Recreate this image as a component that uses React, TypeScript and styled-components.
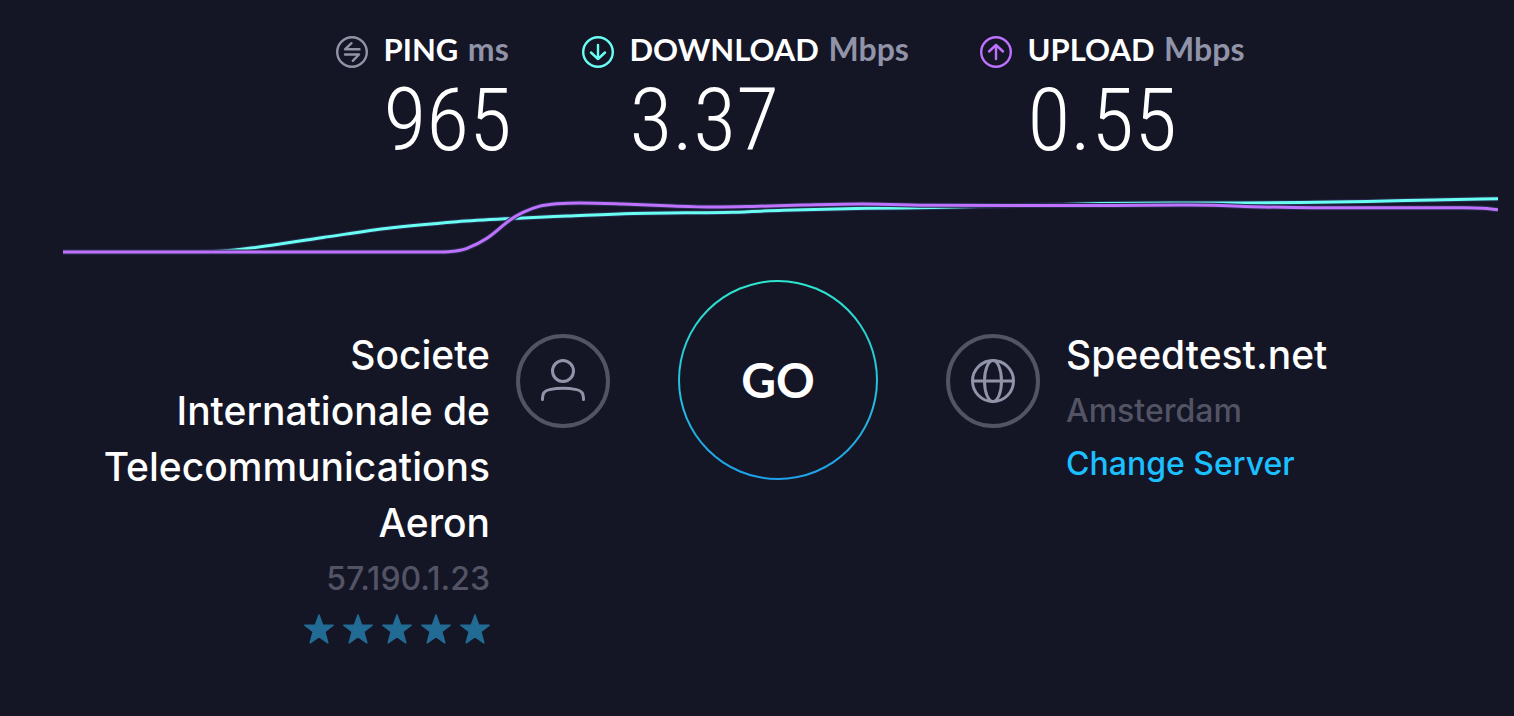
import React from "react";
import styled, { createGlobalStyle } from "styled-components";

const colors = {
  bg: "#141625",
  text: "#ffffff",
  muted: "#9193a8",
  dim: "#525466",
  cyan: "#6afff3",
  purple: "#bf71ff",
  link: "#1cbfff",
  star: "#226b95",
  halo: "#262c4e",
};

const GlobalStyle = createGlobalStyle`
  *, *::before, *::after { box-sizing: border-box; }
  body {
    margin: 0;
    background: ${colors.bg};
    color: ${colors.text};
    font-family: Inter, "Liberation Sans", sans-serif;
  }
`;

const Page = styled.main`
  padding: 32px 0 64px 42px;
`;

const Metrics = styled.section`
  display: flex;
  justify-content: center;
  gap: 72px;
  padding-left: 25px;
`;

const MetricBox = styled.div<{ $width: number }>`
  display: grid;
  grid-template-columns: 32px auto;
  column-gap: 16px;
  width: ${(p) => p.$width}px;
  white-space: nowrap;

  svg {
    margin-top: 4px;
  }
`;

const MetricTitle = styled.h2`
  margin: 0;
  font: 700 31px/34px Lato, "Liberation Sans", sans-serif;
`;

const Unit = styled.span`
  margin-left: 2px;
  color: ${colors.muted};
  font-size: 32px;
`;

const MetricValue = styled.div`
  grid-column: 2;
  font: 300 88px/104px "Roboto Condensed", Roboto, sans-serif;
`;

const ChartArea = styled.div`
  margin: 18px 16px 0 21px;

  svg {
    display: block;
    width: 100%;
    height: 70px;
  }
`;

const Connection = styled.section`
  display: grid;
  grid-template-columns: minmax(0, 1fr) 200px minmax(0, 1fr);
  column-gap: 68px;
  margin-top: 20px;
`;

const Side = styled.div<{ $end?: boolean }>`
  display: flex;
  flex-direction: ${(p) => (p.$end ? "row-reverse" : "row")};
  gap: 26px;
  padding-top: 47px;
  text-align: ${(p) => (p.$end ? "right" : "left")};
`;

const Badge = styled.div`
  display: flex;
  flex: none;
  align-items: center;
  justify-content: center;
  width: 94px;
  height: 94px;
  margin-top: 7px;
  border: 4px solid ${colors.dim};
  border-radius: 50%;
`;

const Details = styled.div`
  max-width: 388px;
`;

const Name = styled.h3`
  margin: 0;
  font-size: 39px;
  font-weight: 500;
  line-height: 56px;
`;

const Sub = styled.p`
  margin: 0;
  color: ${colors.dim};
  font-size: 32px;
  font-weight: 500;
  line-height: 56px;
`;

const ServerLink = styled.a`
  display: block;
  color: ${colors.link};
  font-size: 32px;
  font-weight: 500;
  line-height: 50px;
  text-decoration: none;
`;

const Stars = styled.div`
  display: flex;
  justify-content: flex-end;
  gap: 9px;
  margin-top: 7px;
`;

const GoButton = styled.button`
  width: 200px;
  height: 200px;
  padding: 0;
  border: 2px solid transparent;
  border-radius: 50%;
  background:
    linear-gradient(${colors.bg}, ${colors.bg}) padding-box,
    linear-gradient(#2ee6cf, #1f9fe8) border-box;
  color: ${colors.text};
  font: 700 48px/56px Lato, "Liberation Sans", sans-serif;
  cursor: pointer;
`;

type MetricKind = "ping" | "download" | "upload";

const metricGlyphs: Record<MetricKind, { color: string; path: string }> = {
  ping: { color: colors.muted, path: "M23.500 13.300H9L15.500 7.200M9 18.500H23L16.800 24.800" },
  download: { color: colors.cyan, path: "M16 9V23M9 16.500L16 23L23 16.500" },
  upload: { color: colors.purple, path: "M16 23V9M9 15.500L16 9L23 15.500" },
};

function MetricIcon({ kind }: { kind: MetricKind }) {
  const { color, path } = metricGlyphs[kind];
  return (
    <svg width="32" height="32" fill="none" stroke={color} strokeWidth="2.400" aria-hidden="true">
      <circle cx="16" cy="16" r="14.800" />
      <path d={path} strokeLinecap="round" strokeLinejoin="round" />
    </svg>
  );
}

interface MetricProps {
  kind: MetricKind;
  label: string;
  unit: string;
  value: string;
  width: number;
}

function Metric({ kind, label, unit, value, width }: MetricProps) {
  return (
    <MetricBox $width={width}>
      <MetricIcon kind={kind} />
      <MetricTitle>
        {label} <Unit>{unit}</Unit>
      </MetricTitle>
      <MetricValue>{value}</MetricValue>
    </MetricBox>
  );
}

type Point = [number, number];

const downloadSamples: Point[] = [
  [0, 62], [60, 62], [120, 62], [155, 61.300], [190, 57.800], [260, 47.500], [327, 38], [394, 31.700],
  [444, 28.700], [504, 26.100], [570, 23.500], [670, 22.200], [720, 20.300],
  [804, 18.300], [870, 17.600], [937, 16], [1037, 13.600], [1137, 13], [1237, 12.600],
  [1304, 11.400], [1370, 10], [1435, 8.700],
];

const uploadSamples: Point[] = [
  [0, 62], [130, 62], [260, 62], [370, 62], [388, 61.500], [404, 58.300], [424, 48.300], [447, 30],
  [460, 22.400], [476, 16.400], [494, 13.800], [517, 12.900], [560, 14], [610, 16], [650, 17], [690, 16.400],
  [740, 15], [800, 14], [870, 15.300], [960, 15.600], [1050, 15.500], [1120, 15.100], [1150, 15.300],
  [1190, 16.700], [1250, 17.800], [1340, 17.700], [1400, 17.700], [1420, 18.200], [1435, 19.700],
];

function smoothPath(points: Point[]): string {
  return points.slice(1).reduce((d, [x, y], i) => {
    const [x0, y0] = points[i];
    const [px, py] = points[Math.max(i - 1, 0)];
    const [nx, ny] = points[Math.min(i + 2, points.length - 1)];
    const s0 = (y - py) / (x - px);
    const s1 = (ny - y0) / (nx - x0);
    const h = (x - x0) / 3;
    return `${d}C${x0 + h} ${y0 + s0 * h} ${x - h} ${y - s1 * h} ${x} ${y}`;
  }, `M${points[0].join(" ")}`);
}

function SpeedChart() {
  const lines = [
    { color: colors.cyan, d: smoothPath(downloadSamples) },
    { color: colors.purple, d: smoothPath(uploadSamples) },
  ];
  return (
    <ChartArea>
      <svg viewBox="0 0 1435 70" preserveAspectRatio="none" fill="none" role="img" aria-label="Download and upload speed">
        {lines.map(({ color, d }) => (
          <g key={color}>
            <path d={d} stroke={colors.halo} strokeWidth="5" />
            <path d={d} stroke={color} strokeWidth="3" />
          </g>
        ))}
      </svg>
    </ChartArea>
  );
}

function UserIcon() {
  return (
    <svg width="46" height="46" fill="none" stroke={colors.muted} strokeWidth="3" aria-hidden="true">
      <circle cx="23" cy="13" r="10.500" />
      <path d="M2.500 41.500V40C2.500 35 5 32.500 9.500 31.600C18 29.900 28 29.900 36.500 31.600C41 32.500 43.500 35 43.500 40V41.500" strokeLinecap="round" />
    </svg>
  );
}

function GlobeIcon() {
  return (
    <svg width="46" height="46" fill="none" stroke={colors.muted} strokeWidth="3" aria-hidden="true">
      <circle cx="23" cy="23" r="20.500" />
      <ellipse cx="23" cy="23" rx="8.500" ry="20.500" />
      <path d="M2.500 23H43.500" />
    </svg>
  );
}

function Star() {
  return (
    <svg width="30" height="30" fill={colors.star} stroke={colors.star} strokeWidth="1.500" strokeLinejoin="round" aria-hidden="true">
      <path d="M15 1L18.600 10.900L29.200 11.200L20.800 17.700L23.800 28.800L15 22.600L6.200 28.800L9.200 17.700L0.800 11.200L11.400 10.900Z" />
    </svg>
  );
}

export default function App() {
  return (
    <>
      <GlobalStyle />
      <Page>
        <Metrics>
          <Metric kind="ping" label="PING" unit="ms" value="965" width={174} />
          <Metric kind="download" label="DOWNLOAD" unit="Mbps" value="3.37" width={326} />
          <Metric kind="upload" label="UPLOAD" unit="Mbps" value="0.55" width={266} />
        </Metrics>
        <SpeedChart />
        <Connection>
          <Side $end>
            <Badge>
              <UserIcon />
            </Badge>
            <Details>
              <Name>Societe Internationale de Telecommunications Aeron</Name>
              <Sub>57.190.1.23</Sub>
              <Stars role="img" aria-label="5 out of 5 stars">
                {[1, 2, 3, 4, 5].map((n) => (
                  <Star key={n} />
                ))}
              </Stars>
            </Details>
          </Side>
          <GoButton type="button">GO</GoButton>
          <Side>
            <Badge>
              <GlobeIcon />
            </Badge>
            <Details>
              <Name>Speedtest.net</Name>
              <Sub>Amsterdam</Sub>
              <ServerLink href="#servers">Change Server</ServerLink>
            </Details>
          </Side>
        </Connection>
      </Page>
    </>
  );
}
